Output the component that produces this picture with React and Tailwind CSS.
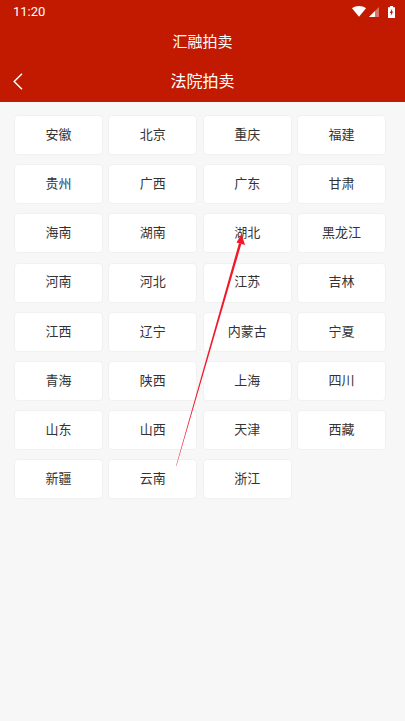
const provinces = [
  "安徽", "北京", "重庆", "福建",
  "贵州", "广西", "广东", "甘肃",
  "海南", "湖南", "湖北", "黑龙江",
  "河南", "河北", "江苏", "吉林",
  "江西", "辽宁", "内蒙古", "宁夏",
  "青海", "陕西", "上海", "四川",
  "山东", "山西", "天津", "西藏",
  "新疆", "云南", "浙江",
];

function StatusBar() {
  return (
    <div className="flex h-[22px] items-center justify-between pl-[13px] pr-[10px] pt-[1px]">
      <span className="text-[13px] font-normal text-white">11:20</span>
      <div className="flex items-center gap-[3px]">
        <svg width="14" height="11" viewBox="0 0 14 11">
          <path d="M0 2.3C4 -0.7 10 -0.7 14 2.3L7 10.8Z" fill="#fff" />
        </svg>
        <svg width="10" height="10" viewBox="0 0 10 10">
          <path d="M10 0V10H0Z" fill="#fff" fillOpacity="0.4" />
          <path d="M6 4V10H0L6 4Z" fill="#fff" />
        </svg>
        <svg width="7" height="12" viewBox="0 0 7 12" className="ml-[6px]">
          <path d="M2 0H5V1.3H7V12H0V1.3H2Z" fill="#fff" />
          <path d="M4.2 2.6L1.8 7H3.1L2.7 10L5.2 5.6H3.9Z" fill="#c21a00" />
        </svg>
      </div>
    </div>
  );
}

function App() {
  return (
    <div className="relative flex h-[721px] w-[405px] flex-col overflow-hidden bg-[#f7f7f7] font-['Roboto','Noto_Sans_CJK_SC',sans-serif]">
      <header className="h-[102px] shrink-0 bg-[#c21a00] text-white">
        <StatusBar />
        <div className="flex h-[38px] items-center justify-center pt-[2px] text-[15px]">汇融拍卖</div>
        <div className="relative flex h-[40px] items-center justify-center pt-[3px] text-[16px]">
          <svg width="10" height="17" viewBox="0 0 10 17" className="absolute left-[13px] top-[13px]" fill="none" stroke="#fff" strokeWidth="1.5">
            <path d="M9 0.8L1.2 8.5L9 16.2" />
          </svg>
          法院拍卖
        </div>
      </header>

      <div className="grid grid-cols-4 gap-x-[5.5px] gap-y-[9.2px] pl-[14px] pr-[19px] pt-[13px]">
        {provinces.map((name) => (
          <div
            key={name}
            className="flex h-[40px] items-center justify-center rounded-[4px] border border-[#f1f1f1] bg-white pb-[1px] text-[13px] text-[#333333]"
          >
            {name}
          </div>
        ))}
      </div>

      {/* annotation arrow drawn over the list */}
      <svg width="405" height="721" viewBox="0 0 405 721" className="pointer-events-none absolute left-0 top-0">
        <path d="M176 466L239 243L241.4 243.8L176.4 466Z" fill="#f0182a" />
        <path d="M241.5 234L245 245L236.5 242.5Z" fill="#f0182a" />
      </svg>
    </div>
  );
}

export default App;
